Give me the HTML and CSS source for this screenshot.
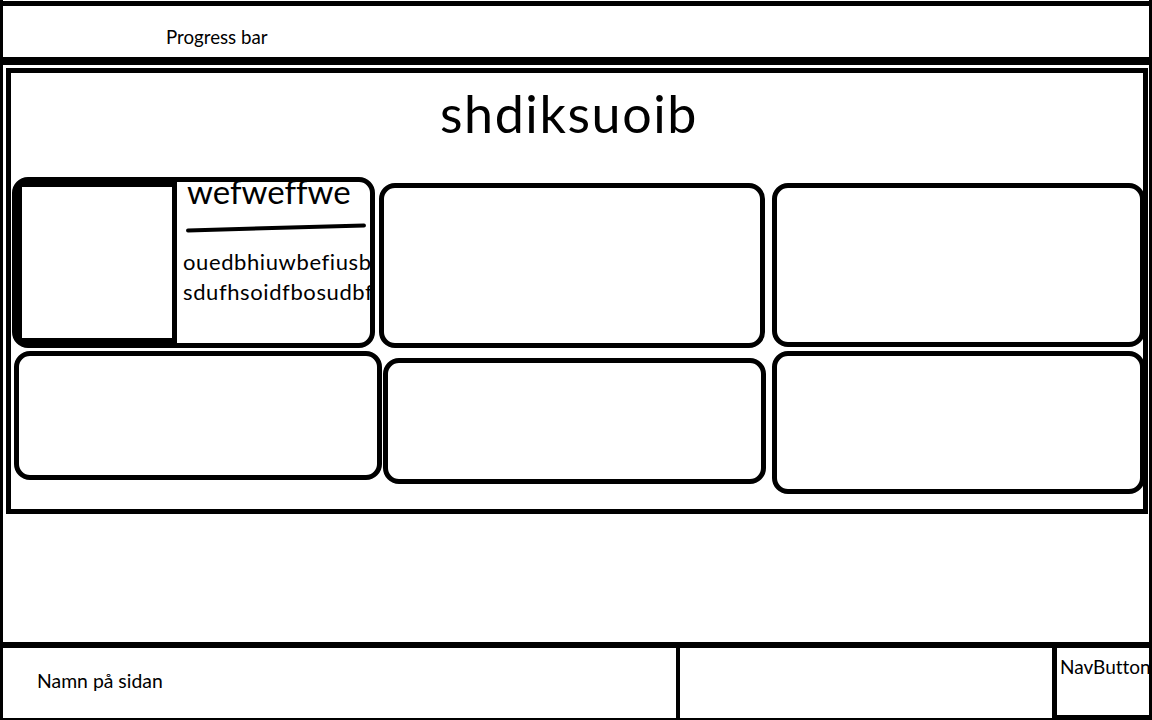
FILE: index.html
```html
<!DOCTYPE html>
<html lang="sv">
<head>
<meta charset="utf-8">
<title>Wireframe</title>
<link rel="stylesheet" href="styles.css">
</head>
<body>
<div class="page">
  <header class="topbar">
    <span class="topbar-label">Progress bar</span>
  </header>
  <main class="main">
    <h1 class="title">shdiksuoib</h1>
    <section class="grid">
      <article class="card card-1">
        <div class="thumb"></div>
        <div class="card-body">
          <h2 class="card-heading">wefweffwe</h2>
          <div class="card-rule"></div>
          <p class="card-text">ouedbhiuwbefiusb<br>sdufhsoidfbosudbf</p>
        </div>
      </article>
      <article class="card card-2"></article>
      <article class="card card-3"></article>
      <article class="card card-4"></article>
      <article class="card card-5"></article>
      <article class="card card-6"></article>
    </section>
  </main>
  <div class="spacer"></div>
  <footer class="footer">
    <div class="foot-name">Namn på sidan</div>
    <div class="foot-mid"></div>
    <div class="navbtn">NavButton</div>
  </footer>
</div>
</body>
</html>
```

FILE: styles.css
```css
* { box-sizing: border-box; }

html, body {
  margin: 0;
  padding: 0;
  background: #fff;
}

body {
  font-family: Lato, "Open Sans", "DejaVu Sans", sans-serif;
  font-variant-ligatures: none;
  color: #000;
}

.page {
  width: 1152px;
  height: 720px;
  border-left: 3px solid #000;
  border-right: 3px solid #000;
  border-bottom: 2px solid #000;
  display: flex;
  flex-direction: column;
}

.topbar {
  margin-top: 1px;
  height: 64px;
  border-top: 5px solid #000;
  border-bottom: 8px solid #000;
  padding: 20px 0 0 163px;
  font-size: 18.7px;
  line-height: 22px;
}

.main {
  margin: 3px 1px 0 3px;
  height: 446px;
  border: 5px solid #000;
  padding-top: 10px;
}

.title {
  margin: 0 16px 0 0;
  font-size: 52px;
  font-weight: 400;
  line-height: 60px;
  letter-spacing: 1.6px;
  text-align: center;
}

.grid {
  margin-top: 34px;
  padding-left: 1px;
  display: grid;
  grid-template-columns: 367px 393px 373px;
  grid-template-rows: 171px auto;
  row-gap: 3px;
  align-items: start;
}

.card {
  border: 5px solid #000;
  border-radius: 16px;
  background: #fff;
}

.card-1 { width: 363px; height: 171px; display: flex; }
.card-2 { width: 386px; height: 165px; margin-top: 6px; }
.card-3 { width: 373px; height: 164px; margin-top: 6px; }
.card-4 { width: 368px; height: 129px; margin-left: 2px; }
.card-5 { width: 383px; height: 126px; margin-left: 4px; margin-top: 7px; }
.card-6 { width: 373px; height: 143px; }

.thumb {
  width: 160px;
  flex: none;
  border: 5px solid #000;
}

.card-body {
  flex: 1;
  min-width: 0;
  overflow: hidden;
  padding-left: 6px;
  border-top-right-radius: 11px;
  border-bottom-right-radius: 11px;
}

.card-heading {
  margin: 0;
  padding-left: 4px;
  font-size: 33px;
  font-weight: 400;
  line-height: 19px;
  white-space: nowrap;
}

.card-rule {
  width: 180px;
  height: 4px;
  margin: 25px 0 0 3px;
  background: #000;
  border-radius: 2px;
  transform: rotate(-1.6deg);
}

.card-text {
  margin: 17px 0 0 0;
  font-size: 22px;
  line-height: 30px;
  letter-spacing: 0.6px;
  white-space: nowrap;
}

.spacer { flex: 1; }

.footer {
  height: 76px;
  border-top: 6px solid #000;
  display: flex;
  line-height: 22px;
}

.foot-name {
  width: 677px;
  border-right: 4px solid #000;
  padding: 22px 0 0 34px;
  font-size: 19.4px;
}

.foot-mid { flex: 1; }

.navbtn {
  width: 97px;
  border-left: 5px solid #000;
  border-bottom: 3px solid #000;
  padding: 8px 0 0 3px;
  font-size: 19px;
  white-space: nowrap;
  overflow: hidden;
}
```
